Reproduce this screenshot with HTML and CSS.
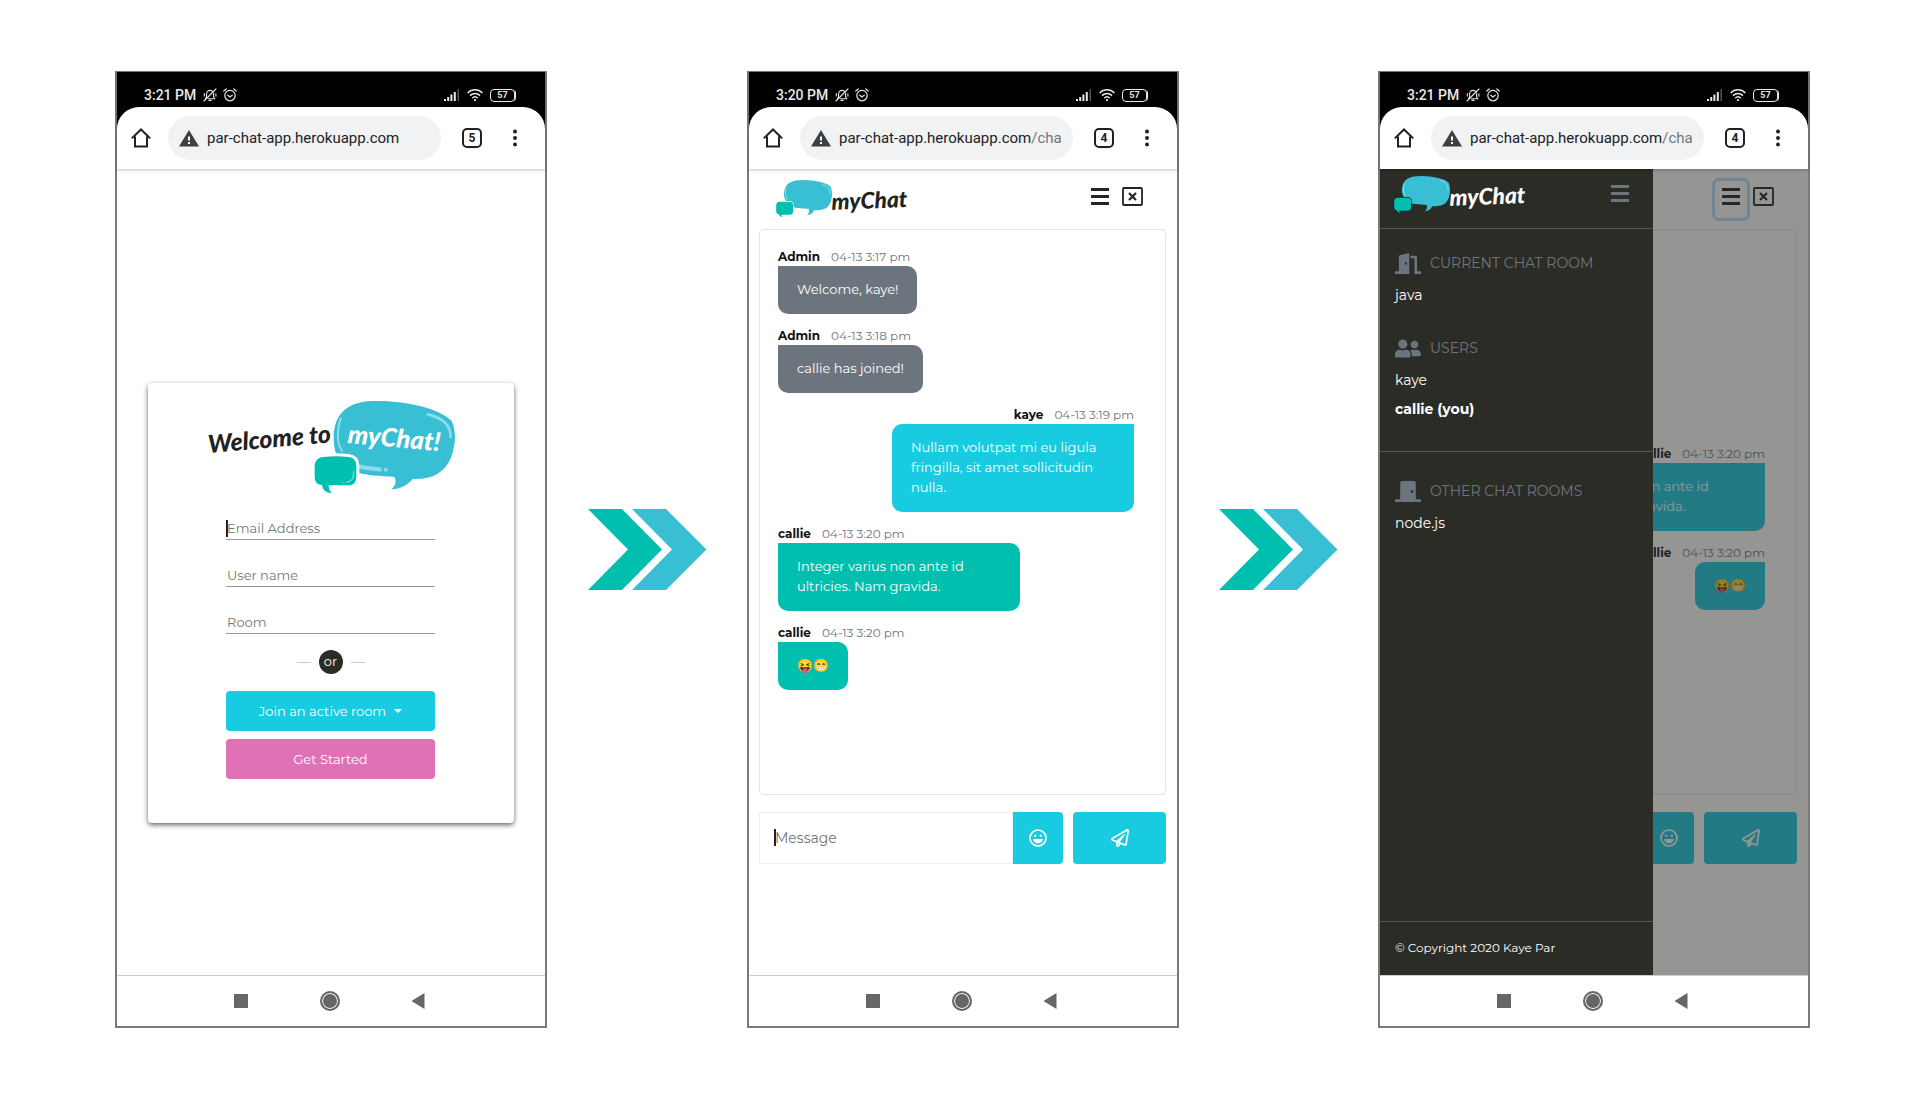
FILE: index.html
```html
<!DOCTYPE html>
<html lang="en">
<head>
<meta charset="utf-8">
<meta name="viewport" content="width=device-width, initial-scale=1">
<title>myChat</title>
<link rel="stylesheet" href="styles.css">
</head>
<body>
<svg class="sprite" aria-hidden="true">
  <symbol id="bell-off" viewBox="0 0 14 14"><g fill="none" stroke="currentColor" stroke-width="1.1" stroke-linecap="round" stroke-linejoin="round"><path d="M3.6 9V6.2C3.6 3.8 5 2.4 7 2.4c1 0 1.9.4 2.5 1M10.600 5.200V9l1.200 1.800H5.500M6 12.400h2M1 13 13 1M1.300 5.500v2.500M12.900 5.800v2.500M3.600 9l-1.200 1.600"/></g></symbol>
  <symbol id="alarm" viewBox="0 0 14 14"><g fill="none" stroke="currentColor" stroke-width="1.200" stroke-linecap="round"><circle cx="7" cy="7.600" r="5.200"/><path d="M4.800 7.200 7 8.900l2.300-1.800M.8 3 3.200 1M13.200 3 10.800 1"/></g></symbol>
  <symbol id="signal" viewBox="0 0 16 12"><path fill="currentColor" d="M0 10h2v2H0zM3.200 8h2v4h-2zM6.400 5.500h2V12h-2zM9.800 3h2v9h-2z"/><path fill="#555" d="M13.500 0h1.500v12h-1.500z"/></symbol>
  <symbol id="wifi" viewBox="0 0 16 12"><g fill="none" stroke="currentColor" stroke-width="1.500"><path d="M.6 4C4.800-.2 11.200-.2 15.400 4M3 6.600c2.900-2.900 7.100-2.900 10 0M5.300 9.100c1.600-1.600 3.800-1.600 5.400 0"/></g><circle cx="8" cy="11" r="1.100" fill="currentColor"/></symbol>
  <symbol id="home" viewBox="0 0 20 20"><path d="M.8 10.400 10 1.500l9.200 8.900M4 8.500v10h12v-10" fill="none" stroke="currentColor" stroke-width="2"/></symbol>
  <symbol id="warning" viewBox="0 0 20 17"><path fill="currentColor" d="M10 0l10 16.500H0z"/><path fill="#fff" d="M9 6.500h2v4H9zM9 12h2v2H9z"/></symbol>
  <symbol id="dots" viewBox="0 0 4 18"><g fill="currentColor"><circle cx="2" cy="2.500" r="2"/><circle cx="2" cy="9" r="2"/><circle cx="2" cy="15.500" r="2"/></g></symbol>
  <symbol id="menu" viewBox="0 0 18 17"><path fill="currentColor" d="M0 0h18v3H0zM0 7h18v3H0zM0 14h18v3H0z"/></symbol>
  <symbol id="exit" viewBox="0 0 21 19"><rect x="1" y="1" width="19" height="17" rx="1" fill="none" stroke="currentColor" stroke-width="1.800"/><path d="m7 6 7 7m0-7-7 7" stroke="currentColor" stroke-width="2.200"/></symbol>
  <symbol id="smile" viewBox="0 0 18 18"><circle cx="9" cy="9" r="8" fill="none" stroke="currentColor" stroke-width="1.700"/><circle cx="6.200" cy="6.800" r="1.200" fill="currentColor"/><circle cx="11.800" cy="6.800" r="1.200" fill="currentColor"/><path fill="currentColor" d="M4 10h10c-.4 2.800-2.500 4.300-5 4.300S4.400 12.800 4 10z"/></symbol>
  <symbol id="plane" viewBox="0 0 512 512"><path fill="currentColor" d="M440 6.500L24 246.400c-34.400 19.900-31.100 70.800 5.700 85.900L144 379.600V464c0 46.400 59.200 65.500 86.600 28.600l43.800-59.100 111.900 46.200c5.900 2.400 12.100 3.600 18.300 3.600 8.200 0 16.300-2.100 23.600-6.200 12.800-7.200 21.600-20 23.900-34.500l59.400-387.200c6.100-40.100-36.900-68.800-71.500-48.900zM192 464v-64.600l36.600 15.100L192 464zm212.600-28.700l-153.800-63.500L391 169.500c10.700-15.500-9.500-33.500-23.700-21.200L155.800 332.600 48 288 464 48l-59.400 387.300z"/></symbol>
  <symbol id="door-open" viewBox="0 0 640 512"><path fill="currentColor" d="M624 448h-80V113.450C544 86.190 522.470 64 496 64H384v64h96v384h144c8.840 0 16-7.160 16-16v-32c0-8.840-7.160-16-16-16zM312.240 1.010l-192 49.740C105.990 54.440 96 67.700 96 82.920V448H16c-8.840 0-16 7.160-16 16v32c0 8.840 7.160 16 16 16h336V33.180c0-21.580-19.560-37.410-39.760-32.170zM264 288c-13.250 0-24-14.330-24-32s10.750-32 24-32 24 14.330 24 32-10.750 32-24 32z"/></symbol>
  <symbol id="door-closed" viewBox="0 0 640 512"><path fill="currentColor" d="M624 448H512V50.800C512 22.780 490.470 0 464 0H175.990c-26.470 0-48 22.780-48 50.800V448H16c-8.840 0-16 7.160-16 16v32c0 8.840 7.160 16 16 16h608c8.840 0 16-7.160 16-16v-32c0-8.840-7.160-16-16-16zM415.990 288c-17.670 0-32-14.330-32-32s14.330-32 32-32 32 14.330 32 32c.01 17.670-14.320 32-32 32z"/></symbol>
  <symbol id="users" viewBox="0 0 640 512"><path fill="currentColor" d="M192 256c61.900 0 112-50.100 112-112S253.900 32 192 32 80 82.100 80 144s50.100 112 112 112zm76.800 32h-8.300c-20.800 10-43.900 16-68.500 16s-47.600-6-68.500-16h-8.300C51.600 288 0 339.600 0 403.200V432c0 26.500 21.500 48 48 48h288c26.500 0 48-21.500 48-48v-28.800c0-63.600-51.600-115.200-115.200-115.200zM480 256c53 0 96-43 96-96s-43-96-96-96-96 43-96 96 43 96 96 96zm48 32h-3.800c-13.900 4.800-28.600 8-44.200 8s-30.300-3.200-44.200-8H432c-20.400 0-39.200 5.900-55.700 15.400 24.400 26.300 39.700 61.200 39.700 99.800v38.400c0 2.200-.5 4.300-.6 6.400H592c26.500 0 48-21.500 48-48 0-61.900-50.100-112-112-112z"/></symbol>
  <symbol id="bubbles" viewBox="105 340 398 123">
    <path fill="#39bfd4" d="M131 385c2-34 24-42 59-42 35 1 72 8 82 21 8 22 3 60-22 67-10 3-22 3-28 3-3 9-12 14-21 15 6-7 6-13 5-19-16-1-36-2-46-5-15-7-29-20-29-40z"/>
    <path fill="none" stroke="#8fdce8" stroke-width="3" stroke-linecap="round" d="M138 366c-4 14-3 28 3 37M248 357c14 3 22 12 21 26"/>
    <path fill="#00bfae" stroke="var(--edge)" stroke-width="4" paint-order="stroke" d="M120 408h28c8 0 11 4 11 12v15c0 8-3 12-11 12h-25c0 3 2 5 6 7-8 0-12-3-13-8-6-1-8-5-8-11v-15c0-8 4-12 12-12z"/>
  </symbol>
  <symbol id="chevrons" viewBox="0 0 119 81"><path fill="#00bfae" d="M0 0h34l40 40.500L34 81H0l40-40.500z"/><path fill="#39bfd4" d="M44 0h34l40.500 40.500L78 81H44l40-40.500z"/></symbol>
</svg>

<main class="flow">
  <section class="phone" aria-label="Sign in">
    <header class="phone-top">
      <div class="status">
        <span class="clock">3:21 PM</span>
        <svg class="i14"><use href="#bell-off"/></svg>
        <svg class="i14"><use href="#alarm"/></svg>
        <span class="spacer"></span>
        <svg class="i16"><use href="#signal"/></svg>
        <svg class="i16"><use href="#wifi"/></svg>
        <span class="battery">57</span>
      </div>
      <div class="toolbar">
        <svg class="i20"><use href="#home"/></svg>
        <div class="url"><svg class="warn"><use href="#warning"/></svg><span>par-chat-app.herokuapp.com</span></div>
        <button class="tabs" type="button">5</button>
        <svg class="dots"><use href="#dots"/></svg>
      </div>
    </header>
    <div class="screen welcome">
      <form class="card">
        <svg class="welcome-logo" viewBox="200 66 747 294" role="img" aria-label="Welcome to myChat!">
          <path fill="#39bfd4" d="M583 190C583 120 620 80 700 78c90-2 200 20 237 60 14 30 13 70-2 110-20 45-55 66-115 64-15 18-35 30-64 31 16-13 14-28 9-37-45-3-85-6-105-12-50-19-77-44-77-104z"/>
          <g fill="none" stroke="#8fdce8" stroke-linecap="round"><path stroke-width="6" d="M604 130c-11 38-11 75 4 98"/><path stroke-width="8" d="M865 118c45 10 69 32 69 68"/><path stroke-width="13" d="M650 273q35 8 71 10"/></g>
          <circle cx="739" cy="284" r="6" fill="#8fdce8"/>
          <path fill="#00bfae" stroke="#fff" stroke-width="18" paint-order="stroke" d="M552 246q38-5 75 0c18 2 24 12 24 28v28c0 20-7 29-24 29h-59c0 10 2 17 10 23-18 0-28-8-30-24-16-2-22-9-22-28v-26c0-18 9-28 26-30z"/>
          <path fill="none" stroke="#6fdccf" stroke-width="4" stroke-linecap="round" d="M643 290c0 22-6 29-22 32M612 323h1"/>
          <text class="brand-text" x="208" y="234" font-size="74" transform="rotate(-5 208 234)" fill="#222">Welcome to</text>
          <text class="brand-text" x="624" y="204" font-size="77" transform="rotate(5 624 204)" fill="#fff">myChat!</text>
        </svg>
        <label class="field focused"><input type="email" placeholder="Email Address" aria-label="Email Address"></label>
        <label class="field"><input type="text" placeholder="User name" aria-label="User name"></label>
        <label class="field"><input type="text" placeholder="Room" aria-label="Room"></label>
        <div class="or"><span>or</span></div>
        <button class="btn join" type="button">Join an active room</button>
        <button class="btn start" type="submit">Get Started</button>
      </form>
    </div>
    <nav class="navbar"><span class="recent"></span><span class="circle"></span><span class="back"></span></nav>
  </section>

  <svg class="arrow"><use href="#chevrons"/></svg>

  <section class="phone" aria-label="Chat room">
    <header class="phone-top">
      <div class="status">
        <span class="clock">3:20 PM</span>
        <svg class="i14"><use href="#bell-off"/></svg>
        <svg class="i14"><use href="#alarm"/></svg>
        <span class="spacer"></span>
        <svg class="i16"><use href="#signal"/></svg>
        <svg class="i16"><use href="#wifi"/></svg>
        <span class="battery">57</span>
      </div>
      <div class="toolbar">
        <svg class="i20"><use href="#home"/></svg>
        <div class="url"><svg class="warn"><use href="#warning"/></svg><span>par-chat-app.herokuapp.com<span class="path">/cha</span></span></div>
        <button class="tabs" type="button">4</button>
        <svg class="dots"><use href="#dots"/></svg>
      </div>
    </header>
    <div class="screen">
      <div class="chat-head">
        <svg class="logo" viewBox="105 340 398 123" role="img" aria-label="myChat"><use href="#bubbles" x="105" y="340" width="398" height="123"/><text class="brand-text" x="275" y="432" font-size="68" transform="rotate(-2 275 432)" fill="#222">myChat</text></svg>
        <button class="icon-btn" type="button" aria-label="Menu"><svg class="menu"><use href="#menu"/></svg></button>
        <button class="icon-btn exit-btn" type="button" aria-label="Leave room"><svg class="exit"><use href="#exit"/></svg></button>
      </div>
      <div class="log">
        <article class="msg admin"><p class="meta"><b>Admin</b><time>04-13 3:17 pm</time></p><p class="bubble">Welcome, kaye!</p></article>
        <article class="msg admin"><p class="meta"><b>Admin</b><time>04-13 3:18 pm</time></p><p class="bubble">callie has joined!</p></article>
        <article class="msg mine"><p class="meta"><b>kaye</b><time>04-13 3:19 pm</time></p><p class="bubble">Nullam volutpat mi eu ligula fringilla, sit amet sollicitudin nulla.</p></article>
        <article class="msg"><p class="meta"><b>callie</b><time>04-13 3:20 pm</time></p><p class="bubble">Integer varius non ante id ultricies. Nam gravida.</p></article>
        <article class="msg"><p class="meta"><b>callie</b><time>04-13 3:20 pm</time></p><p class="bubble">😝😁</p></article>
      </div>
      <form class="compose">
        <label class="entry focused"><textarea rows="1" placeholder="Message" aria-label="Message"></textarea></label>
        <button class="emoji-btn" type="button" aria-label="Emoji"><svg class="i18"><use href="#smile"/></svg></button>
        <button class="send-btn" type="submit" aria-label="Send"><svg class="i18"><use href="#plane"/></svg></button>
      </form>
    </div>
    <nav class="navbar"><span class="recent"></span><span class="circle"></span><span class="back"></span></nav>
  </section>

  <svg class="arrow"><use href="#chevrons"/></svg>

  <section class="phone" aria-label="Chat room menu">
    <header class="phone-top">
      <div class="status">
        <span class="clock">3:21 PM</span>
        <svg class="i14"><use href="#bell-off"/></svg>
        <svg class="i14"><use href="#alarm"/></svg>
        <span class="spacer"></span>
        <svg class="i16"><use href="#signal"/></svg>
        <svg class="i16"><use href="#wifi"/></svg>
        <span class="battery">57</span>
      </div>
      <div class="toolbar">
        <svg class="i20"><use href="#home"/></svg>
        <div class="url"><svg class="warn"><use href="#warning"/></svg><span>par-chat-app.herokuapp.com<span class="path">/cha</span></span></div>
        <button class="tabs" type="button">4</button>
        <svg class="dots"><use href="#dots"/></svg>
      </div>
    </header>
    <div class="screen">
      <div class="chat-head">
        <span class="logo"></span>
        <button class="icon-btn ringed" type="button" aria-label="Menu"><svg class="menu"><use href="#menu"/></svg></button>
        <button class="icon-btn exit-btn" type="button" aria-label="Leave room"><svg class="exit"><use href="#exit"/></svg></button>
      </div>
      <div class="log scrolled">
        <article class="msg mine"><p class="meta"><b>callie</b><time>04-13 3:20 pm</time></p><p class="bubble">Integer varius non ante id ultricies. Nam gravida.</p></article>
        <article class="msg mine"><p class="meta"><b>callie</b><time>04-13 3:20 pm</time></p><p class="bubble">😝😁</p></article>
      </div>
      <form class="compose">
        <label class="entry"><textarea rows="1" aria-label="Message"></textarea></label>
        <button class="emoji-btn" type="button" aria-label="Emoji"><svg class="i18"><use href="#smile"/></svg></button>
        <button class="send-btn" type="submit" aria-label="Send"><svg class="i18"><use href="#plane"/></svg></button>
      </form>
      <div class="backdrop"></div>
      <aside class="sidebar">
        <div class="side-head">
          <svg class="logo" viewBox="105 340 398 123" role="img" aria-label="myChat"><use href="#bubbles" x="105" y="340" width="398" height="123"/><text class="brand-text" x="275" y="432" font-size="68" transform="rotate(-2 275 432)" fill="#fff">myChat</text></svg>
          <button class="icon-btn muted" type="button" aria-label="Close menu"><svg class="menu"><use href="#menu"/></svg></button>
        </div>
        <div class="side-block">
          <h2><svg class="side-icon"><use href="#door-open"/></svg>CURRENT CHAT ROOM</h2>
          <ul><li>java</li></ul>
          <h2><svg class="side-icon"><use href="#users"/></svg>USERS</h2>
          <ul><li>kaye</li><li><b>callie (you)</b></li></ul>
        </div>
        <div class="side-block others">
          <h2><svg class="side-icon"><use href="#door-closed"/></svg>OTHER CHAT ROOMS</h2>
          <ul><li>node.js</li></ul>
        </div>
        <footer>© Copyright 2020 Kaye Par</footer>
      </aside>
    </div>
    <nav class="navbar"><span class="recent"></span><span class="circle"></span><span class="back"></span></nav>
  </section>
</main>
</body>
</html>
```
FILE: styles.css
```css
:root {
  --cyan: #18cbe0;
  --teal: #00bfae;
  --pink: #df72b6;
  --slate: #6c757d;
  --ink: #2c2c27;
}

* { box-sizing: border-box; }

body {
  margin: 0;
  background: #fff;
  color: #212529;
  font: 13px/20px Montserrat, Inter, sans-serif;
}

p, h2, ul { margin: 0; padding: 0; }
ul { list-style: none; }
svg { display: block; flex: none; }
button { padding: 0; border: 0; background: none; color: inherit; font: inherit; }
input, textarea { font: inherit; }

.sprite { position: absolute; width: 0; height: 0; }

.flow {
  display: grid;
  grid-template-columns: minmax(0, 432px) 200fr minmax(0, 432px) 199fr minmax(0, 432px);
  align-items: center;
  padding: 71px 112px 60px 115px;
}

.arrow { width: 119px; height: 81px; justify-self: center; }

/* Device frame */
.phone {
  display: flex;
  flex-direction: column;
  border: 2px solid #7a7a7a;
  border-top-width: 1px;
}

.phone-top { background: #000; position: relative; z-index: 1; box-shadow: 0 1px 3px rgba(0, 0, 0, .25); }

.status {
  display: flex;
  align-items: center;
  height: 35px;
  padding: 11px 28px 0 27px;
  color: #e8e8e8;
}
.clock { margin-right: 7px; font: 500 14px/20px Roboto, sans-serif; }
.spacer { flex: 1; }
.i14 { width: 14px; height: 14px; margin-right: 6px; }
.i16 { width: 16px; height: 12px; margin-right: 7px; }
.i18 { width: 18px; height: 18px; }
.i20 { width: 20px; height: 20px; }

.battery {
  width: 25px;
  height: 13px;
  margin-right: 2px;
  border: 1px solid #e8e8e8;
  border-radius: 4px;
  box-shadow: 2px 0 0 -1px #e8e8e8;
  font: 700 9px/11px Roboto, sans-serif;
  text-align: center;
}

.toolbar {
  display: flex;
  align-items: center;
  height: 62px;
  padding: 0 28px 0 14px;
  border-radius: 22px 22px 0 0;
  background: #fff;
  color: #202124;
}
.url {
  display: flex;
  flex: 1;
  align-items: center;
  gap: 8px;
  height: 44px;
  margin: 0 21px 0 17px;
  padding-left: 11px;
  border-radius: 22px;
  background: #f1f2f4;
  overflow: hidden;
  font: 15px/20px Roboto, sans-serif;
  white-space: nowrap;
}
.path { color: #70757a; }
.warn { width: 20px; height: 17px; color: #3c4043; }
.tabs {
  width: 20px;
  height: 20px;
  margin-right: 31px;
  border: 2px solid #202124;
  border-radius: 5px;
  font: 700 12px/16px Roboto, sans-serif;
}
.dots { width: 4px; height: 18px; }

.screen {
  position: relative;
  display: flex;
  flex: 1;
  flex-direction: column;
  min-height: 806px;
}

.navbar {
  display: flex;
  align-items: center;
  justify-content: center;
  gap: 72px;
  height: 51px;
  padding-right: 4px;
  border-top: 1px solid #ccc;
}
.recent { width: 14px; height: 14px; background: #666; }
.circle { width: 20px; height: 20px; border: 2px solid #666; border-radius: 50%; background: #666; box-shadow: inset 0 0 0 1px #fff; }
.back { width: 13px; height: 16px; background: #666; clip-path: polygon(0 50%, 100% 0, 100% 100%); }

/* Sign-in card */
.welcome { align-items: center; justify-content: center; padding-top: 62px; }
.card {
  display: flex;
  flex-direction: column;
  align-items: center;
  width: 366px;
  max-width: 100%;
  padding: 14px 33px 44px 32px;
  border-radius: 4px;
  background: #fff;
  box-shadow: 0 2px 5px rgba(0, 0, 0, .6);
}
.welcome-logo { width: 249px; height: 98px; margin-bottom: 20px; }
.brand-text { font-family: Lato, "Liberation Sans", sans-serif; font-style: italic; font-weight: 900; }

.field { position: relative; width: 209px; height: 25px; margin-bottom: 22px; }
.field input {
  display: block;
  width: 100%;
  height: 25px;
  padding: 2px 0 0 1px;
  border: 0;
  border-bottom: 1px solid #999;
  background: none;
}
::placeholder { color: #757575; opacity: 1; }
.focused::before {
  content: "";
  position: absolute;
  left: 0;
  top: 5px;
  width: 2px;
  height: 17px;
  background: #222;
}

.or { display: flex; align-items: center; gap: 8px; margin: -6px 0 17px; }
.or::before, .or::after { content: ""; width: 14px; height: 1px; background: #ccc; }
.or span {
  width: 24px;
  height: 24px;
  border-radius: 50%;
  background: var(--ink);
  color: #fff;
  line-height: 23px;
  text-align: center;
}

.btn { width: 209px; height: 40px; border-radius: 4px; color: #fff; }
.join { display: flex; align-items: center; justify-content: center; gap: 8px; margin-bottom: 8px; background: var(--cyan); }
.join::after { content: ""; border: 4px solid transparent; border-top-color: #fff; border-bottom: 0; }
.start { background: var(--pink); }

/* Chat */
.chat-head { display: flex; align-items: center; height: 60px; padding: 0 34px 0 26px; }
.logo { width: 133px; height: 41px; margin-right: auto; --edge: #fff; }
.icon-btn { display: grid; place-items: center; height: 37px; width: 32px; padding-bottom: 5px; border-radius: 4px; }
.exit-btn { width: 21px; margin-left: 6px; }
.ringed { box-shadow: 0 0 0 3px #b4dcff; }
.menu { width: 18px; height: 17px; }
.exit { width: 21px; height: 19px; }

.log {
  display: flex;
  flex-direction: column;
  gap: 15px;
  min-height: 566px;
  margin: 0 11px 17px 10px;
  padding: 20px 31px 20px 18px;
  border: 1px solid #e4e4e4;
  border-radius: 4px;
}
.scrolled { padding-top: 217px; }
.msg { align-self: flex-start; max-width: 242px; }
.mine { align-self: flex-end; }
.meta { display: flex; gap: 11px; padding-bottom: 2px; font-size: 12px; line-height: 14px; white-space: nowrap; }
.meta b { color: #111; }
.meta time { color: var(--slate); }
.bubble { width: fit-content; padding: 13px 19px 15px; border-radius: 0 10px 10px; background: var(--teal); color: #fff; }
.admin .bubble { background: var(--slate); }
.mine .meta { justify-content: flex-end; }
.mine .bubble { margin-left: auto; border-radius: 10px 0 10px 10px; background: var(--cyan); }

.compose { display: flex; height: 52px; margin: 0 11px 0 10px; }
.entry { position: relative; display: block; flex: 1; }
.entry textarea {
  display: block;
  width: 100%;
  height: 52px;
  padding: 15px;
  border: 1px solid #eee;
  font-size: 14px;
  line-height: 20px;
  resize: none;
}
.entry.focused::before { left: 15px; top: 17px; }
.emoji-btn, .send-btn { display: grid; place-items: center; background: var(--cyan); color: #fff; }
.emoji-btn { width: 50px; border-radius: 0 4px 4px 0; }
.send-btn { width: 93px; margin-left: 10px; border-radius: 4px; }

/* Drawer over the chat */
.backdrop { position: absolute; inset: 0; background: var(--ink); opacity: .5; }
.sidebar {
  position: absolute;
  inset: 0 auto 0 0;
  display: flex;
  flex-direction: column;
  width: 273px;
  background: var(--ink);
  color: #fff;
}
.side-head { display: flex; align-items: center; height: 60px; padding: 0 17px 6px 13px; border-bottom: 1px solid #55565a; }
.side-head .logo { --edge: #222; }
.muted { color: var(--slate); }
.side-block { padding: 22px 15px 27px; border-bottom: 1px solid #55565a; font-size: 14px; }
.others { padding-top: 27px; border-bottom: 0; }
.side-block h2 { display: flex; align-items: center; gap: 9px; margin-bottom: 6px; color: var(--slate); font-size: 14px; font-weight: 400; line-height: 24px; }
.side-block ul + h2 { margin-top: 26px; }
.side-block li { line-height: 29px; }
.side-icon { width: 26px; height: 21px; }
footer { margin-top: auto; padding: 16px 15px 17px; border-top: 1px solid #55565a; font-size: 12px; }
```
